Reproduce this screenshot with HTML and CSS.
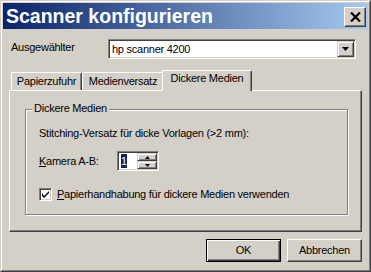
FILE: index.html
```html
<!DOCTYPE html>
<html>
<head>
<meta charset="utf-8">
<link rel="stylesheet" href="styles.css">
</head>
<body>
<div class="window">
  <div class="frame">
    <div class="titlebar">
      <span class="title">Scanner konfigurieren</span>
      <span class="close"><svg width="11" height="10" viewBox="0 0 11 10"><path d="M1 0.5L10 9.5M10 0.5L1 9.5" stroke="#000" stroke-width="2.2" fill="none"/></svg></span>
    </div>
    <div class="content">
      <div class="row-select">
        <span class="lbl">Ausgewählter</span>
        <div class="combo">
          <span class="combo-text">hp scanner 4200</span>
          <span class="dd-btn"><svg width="7" height="4" viewBox="0 0 7 4"><path d="M0 0h7L3.5 4z" fill="#000"/></svg></span>
        </div>
      </div>
      <div class="tabs">
        <div class="tab t1">Papierzufuhr</div>
        <div class="tab t2">Medienversatz</div>
        <div class="tab t3 active">Dickere Medien</div>
      </div>
      <div class="panel">
        <div class="group">
          <span class="group-title">Dickere Medien</span>
          <div class="line">Stitching-Versatz für dicke Vorlagen (&gt;2 mm):</div>
          <div class="spin-row">
            <span class="spin-lbl"><u>K</u>amera A-B:</span>
            <div class="spin">
              <span class="spin-val"><span class="sel">1</span></span>
              <span class="spin-btns">
                <span class="sb"><svg width="5" height="3" viewBox="0 0 5 3"><path d="M2.5 0L5 3H0z" fill="#000"/></svg></span>
                <span class="sb"><svg width="5" height="3" viewBox="0 0 5 3"><path d="M0 0h5L2.5 3z" fill="#000"/></svg></span>
              </span>
            </div>
          </div>
          <div class="check-row">
            <span class="check"><svg width="7" height="7" viewBox="0 0 7 7"><path d="M0 2v3l2 2 5-5V0L2 5z" fill="#000"/></svg></span>
            <span class="check-lbl"><u>P</u>apierhandhabung für dickere Medien verwenden</span>
          </div>
        </div>
      </div>
      <div class="buttons">
        <button class="btn default">OK</button>
        <button class="btn">Abbrechen</button>
      </div>
    </div>
  </div>
</div>
</body>
</html>
```

FILE: styles.css
```css
* { box-sizing: border-box; }
html, body { margin: 0; padding: 0; }
body {
  width: 371px;
  height: 272px;
  overflow: hidden;
  background: #d4d0c8;
  font-family: "Liberation Sans", Arial, sans-serif;
  font-size: 11px;
  letter-spacing: -0.25px;
  line-height: 13px;
  color: #000;
}
.window {
  width: 371px;
  height: 272px;
  border: 1px solid;
  border-color: #d4d0c8 #404040 #404040 #d4d0c8;
  background: #d4d0c8;
}
.frame {
  height: 100%;
  border: 1px solid;
  border-color: #fff #808080 #808080 #fff;
  padding: 1px;
  display: flex;
  flex-direction: column;
}
.titlebar {
  height: 26px;
  background: linear-gradient(to right, #0a246a, #a6caf0);
  display: flex;
  align-items: center;
  justify-content: space-between;
  padding: 0 2px 0 3px;
}
.title {
  color: #fff;
  font-weight: bold;
  font-size: 19.5px;
  letter-spacing: 0;
  line-height: 26px;
}
.close {
  width: 22px;
  height: 20px;
  margin-top: 1px;
  background: #d4d0c8;
  border: 1px solid;
  border-color: #fff #404040 #404040 #fff;
  box-shadow: inset -1px -1px #808080;
  display: flex;
  align-items: center;
  justify-content: center;
}
.close svg { display: block; }
.content {
  padding: 10px 6px 0 6px;
}
.row-select {
  display: flex;
  height: 20px;
  padding: 0 6px 0 2px;
}
.lbl {
  width: 97px;
  padding-top: 2px;
}
.combo, .spin {
  background: #fff;
  border: 1px solid;
  border-color: #808080 #fff #fff #808080;
  box-shadow: inset 1px 1px #404040, inset -1px -1px #d4d0c8;
  padding: 1px;
  display: flex;
  align-items: center;
}
.combo { flex: 1; height: 20px; }
.combo-text { padding-left: 2px; }
.dd-btn, .sb {
  background: #d4d0c8;
  border: 1px solid;
  border-color: #d4d0c8 #404040 #404040 #d4d0c8;
  box-shadow: inset 1px 1px #fff, inset -1px -1px #808080;
  display: flex;
  align-items: center;
  justify-content: center;
}
.dd-btn {
  margin-left: auto;
  width: 17px;
  height: 16px;
}
.dd-btn svg, .sb svg, .check svg { display: block; }
.tabs {
  display: flex;
  align-items: flex-end;
  height: 20px;
  margin-top: 11px;
  padding-left: 2px;
}
.tab {
  height: 18px;
  padding-top: 2px;
  text-align: center;
  border-top: 1px solid #fff;
  border-left: 1px solid #fff;
  border-right: 1px solid #404040;
  box-shadow: inset -1px 0 #808080;
  border-radius: 2px 2px 0 0;
  background: #d4d0c8;
}
.t1 { width: 71px; }
.t2 { width: 82px; }
.t3 { width: 86px; }
.tab.active {
  position: relative;
  z-index: 1;
  width: 90px;
  height: 21px;
  margin: 0 -2px -1px -2px;
  padding-top: 1px;
}
.panel {
  height: 142px;
  border: 1px solid;
  border-color: #fff #404040 #404040 #fff;
  box-shadow: inset -1px -1px #808080;
  padding: 18px 13px 0 15px;
}
.group {
  position: relative;
  height: 106px;
  border: 1px solid #808080;
  box-shadow: inset 1px 1px #fff, 1px 1px #fff;
  padding: 17px 0 0 13px;
}
.group-title {
  position: absolute;
  top: -8px;
  left: 6px;
  padding: 0 2px;
  background: #d4d0c8;
}
.spin-row {
  display: flex;
  align-items: center;
  height: 20px;
  margin-top: 11px;
}
.spin-lbl { width: 78px; }
.spin {
  width: 42px;
  height: 20px;
  align-items: stretch;
}
.spin-val {
  flex: 1;
  padding: 0 0 0 2px;
  display: flex;
  align-items: center;
}
.sel {
  display: inline-block;
  background: #0a246a;
  color: #fff;
  height: 14px;
  line-height: 14px;
  width: 6px;
  letter-spacing: 0;
}
.spin-btns {
  width: 20px;
  display: flex;
  flex-direction: column;
}
.sb { height: 8px; }
.check-row {
  display: flex;
  align-items: center;
  height: 13px;
  margin-top: 17px;
}
.check {
  width: 13px;
  height: 13px;
  background: #fff;
  border: 1px solid;
  border-color: #808080 #fff #fff #808080;
  box-shadow: inset 1px 1px #404040, inset -1px -1px #d4d0c8;
  display: flex;
  align-items: center;
  justify-content: center;
  margin-right: 5px;
}
.buttons {
  display: flex;
  justify-content: flex-end;
  gap: 6px;
  margin-top: 7px;
}
.btn {
  width: 75px;
  height: 23px;
  margin: 0;
  padding: 0;
  font: inherit;
  letter-spacing: inherit;
  color: #000;
  background: #d4d0c8;
  border: 1px solid;
  border-color: #fff #404040 #404040 #fff;
  box-shadow: inset -1px -1px #808080;
  border-radius: 0;
}
.btn.default {
  border-color: #000;
  box-shadow: inset 1px 1px #fff, inset -1px -1px #404040, inset -2px -2px #808080;
}
```
